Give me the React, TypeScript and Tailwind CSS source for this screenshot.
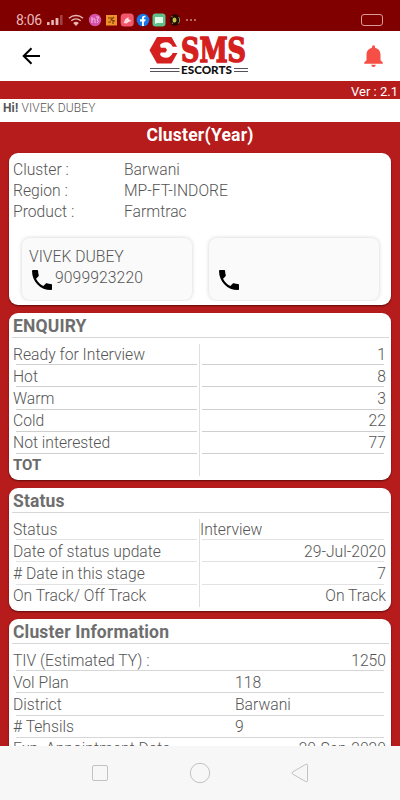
import type { ReactNode } from "react";
import { clsx } from "clsx";

type Align = "left" | "right" | "middle";

interface RowData {
  label: string;
  value?: string;
  align?: Align;
  bold?: boolean;
}

const ENQUIRY: RowData[] = [
  { label: "Ready for Interview", value: "1" },
  { label: "Hot", value: "8" },
  { label: "Warm", value: "3" },
  { label: "Cold", value: "22" },
  { label: "Not interested", value: "77" },
  { label: "TOT", bold: true },
];

const STATUS: RowData[] = [
  { label: "Status", value: "Interview", align: "left" },
  { label: "Date of status update", value: "29-Jul-2020" },
  { label: "# Date in this stage", value: "7" },
  { label: "On Track/ Off Track", value: "On Track" },
];

const CLUSTER_INFO: RowData[] = [
  { label: "TIV (Estimated TY) :", value: "1250" },
  { label: "Vol Plan", value: "118", align: "middle" },
  { label: "District", value: "Barwani", align: "middle" },
  { label: "# Tehsils", value: "9", align: "middle" },
  { label: "Exp. Appointment Date", value: "20-Sep-2020" },
];

const DETAILS = [
  ["Cluster :", "Barwani"],
  ["Region :", "MP-FT-INDORE"],
  ["Product :", "Farmtrac"],
];

function StatusBar() {
  return (
    <div className="flex h-[31px] shrink-0 items-end justify-between bg-[#800000] pr-[17px] pb-[4px] pl-[16px]">
      <div className="flex h-[15px] items-center text-[#e8b9b9]">
        <span className="w-[30px] text-[14px] leading-none font-normal tracking-[-0.3px]">8:06</span>
        <svg className="ml-[1px] h-[10px] w-[17px]" viewBox="0 0 17 10" fill="currentColor">
          <rect x="0" y="7" width="2.6" height="3" rx=".6" />
          <rect x="4.3" y="5" width="2.6" height="5" rx=".6" />
          <rect x="8.6" y="3" width="2.8" height="7" rx=".6" />
          <rect x="13" y="0" width="2.6" height="10" rx=".6" opacity=".35" />
        </svg>
        <svg className="ml-[4px] h-[12px] w-[16px]" viewBox="0 0 16 12" fill="none" stroke="currentColor" strokeWidth="1.4">
          <path d="M1 4.2a10.5 10.5 0 0 1 14 0M3.3 6.7a7 7 0 0 1 9.4 0" />
          <path d="M5.2 9a4.3 4.3 0 0 1 5.6 0L8 12z" fill="currentColor" stroke="none" />
        </svg>
        <svg className="ml-[4px] h-[14px] w-[94px]" viewBox="88 0 94 14">
          <circle cx="95" cy="7" r="6.2" fill="#d552a8" />
          <path d="M92 4v6M92 7q3-3 3 0v3M96 4h3l-2 3q3 1 0 3" fill="none" stroke="#f5b8df" strokeWidth="1" />
          <rect x="106" y="2" width="11" height="10.5" fill="#ef922c" />
          <path d="M108 5h4M108 9h3M114 4l-3 3 4 1M113 7v4" fill="none" stroke="#7a3a08" strokeWidth="1.1" />
          <rect x="120.7" y=".5" width="13" height="13" rx="3.5" fill="#f1576a" />
          <path d="M123.5 10l2-4 3-2v2l3 2-3 1-2 1.5z" fill="#ffd9dc" />
          <circle cx="143" cy="7" r="6.3" fill="#1877e8" />
          <path d="M142 13V8.5h-2V6.3h2V5q0-2.7 3.4-2.3v1.7q-1.5-.2-1.5 1v.9h1.7l-.4 2.2h-1.3V13z" fill="#fff" />
          <rect x="152.5" y=".5" width="13" height="13" rx="3" fill="#5fc089" />
          <path d="M155 4h8v6h-6l-2 1z" fill="#e4fbe9" />
          <ellipse cx="175" cy="7" rx="5" ry="6" fill="#260b04" />
          <ellipse cx="174.5" cy="7" rx="2" ry="2.5" fill="#c1c54b" />
          <path d="M171.5 3l1.2 1.5M178.5 4l1 1.5v3l-1 2M172 11l1-1.5" fill="none" stroke="#b5b36a" strokeWidth=".8" />
        </svg>
        <div className="ml-[4px] flex gap-[2px]">
          <i className="size-[2px] rounded-full bg-[#c98888]" />
          <i className="size-[2px] rounded-full bg-[#c98888]" />
          <i className="size-[2px] rounded-full bg-[#c98888]" />
        </div>
      </div>
      <div className="mb-[1px] h-[12px] w-[22px] rounded-[3px] border border-[#d99a9a]" />
    </div>
  );
}

function Logo() {
  return (
    <svg className="h-[42px] w-[100px] overflow-visible" viewBox="149 34 100 42">
      <path d="M157 36h14.500l7.500 13.300-7.500 13.200H157L149.500 49.300z" fill="#d4211f" />
      {/* wrench */}
      <path d="M160 44q2-2.800 6-2.800 4.500 0 6.700 4.600H180v6.200h-7.300q-2.200 4.800-6.700 4.800-4 0-6-3l.8-2.300h4.700l1.500-2.400-1.500-2.400h-4.700z" fill="#fff" />
      <text
        x="181"
        y="61"
        textLength="65"
        lengthAdjust="spacingAndGlyphs"
        fontFamily="'DejaVu Serif', serif"
        fontWeight="700"
        fontSize="33"
        fill="#d4211f"
        stroke="#d4211f"
        strokeWidth="1.6"
        strokeLinejoin="miter"
      >
        SMS
      </text>
      <text
        x="181"
        y="73.3"
        textLength="51"
        lengthAdjust="spacingAndGlyphs"
        fontFamily="Lato, sans-serif"
        fontWeight="900"
        fontSize="11.5"
        fill="#111"
      >
        ESCORTS
      </text>
      <path d="M150 67.5h29.500M150 70.500h29.500M234 67.500h14M234 70.500h14" stroke="#55505a" strokeWidth="1.1" />
    </svg>
  );
}

function Header() {
  return (
    <header className="flex h-[50px] shrink-0 items-center bg-white pr-[17px] pl-[22px]">
      <svg className="h-[18px] w-[19px]" viewBox="0 0 19 18" fill="none" stroke="#000" strokeWidth="2">
        <path d="M9.5 1.2L1.7 9l7.8 7.8M1.7 9H18" />
      </svg>
      <div className="ml-[108px] flex-1">
        <Logo />
      </div>
      <svg className="h-[22px] w-[19px]" viewBox="0 0 19 22" fill="#f64f46">
        <path d="M8 1.8a1.5 1.5 0 0 1 3 0v.9c3.5.8 5.5 3.5 5.5 7v5.5l2.3 2.3v1.2H.2v-1.2l2.3-2.3V9.7c0-3.5 2-6.2 5.5-7zM7.3 19.7h4.4a2.2 2.2 0 0 1-4.4 0z" />
      </svg>
    </header>
  );
}

function Card({ className, children }: { className?: string; children: ReactNode }) {
  return (
    <section className={clsx("shrink-0 overflow-hidden rounded-[9px] bg-white shadow-[0_1px_2px_rgba(60,0,0,0.7)]", className)}>
      {children}
    </section>
  );
}

function CardTitle({ children }: { children: ReactNode }) {
  return (
    <h2 className="mr-[2px] ml-[3px] h-[25px] border-b border-[#d6d6d6] pl-[1px] text-[17.5px] leading-[26px] font-bold tracking-[0.15px] text-[#6e6e6e]">
      {children}
    </h2>
  );
}

function Rows({ rows, split, line }: { rows: RowData[]; split?: boolean; line: string }) {
  return (
    <div className="relative pt-[5px] pr-[5px] pl-[4px]">
      {split && <div className="absolute top-[6px] bottom-0 left-[190px] w-px bg-[#dedede]" />}
      {rows.map((row, i) => (
        <div key={row.label} className="flex h-[22.2px] flex-col">
          <div className="flex h-[21.2px] items-center pt-[1px] whitespace-nowrap">
            <span className={clsx("flex-1", row.bold && "text-[15px] font-bold text-[#6a6a6a]")}>{row.label}</span>
            <span
              className={clsx(
                row.align === "left" && "w-[186px]",
                row.align === "middle" && "w-[151px]",
              )}
            >
              {row.value}
            </span>
          </div>
          {i < rows.length - 1 && (
            <div className="mr-[2px] ml-[3px] flex gap-[5px]">
              <i className={clsx("h-px w-[181px]", line)} />
              {!split && <i className={clsx("-mx-[5px] h-px w-[5px]", line)} />}
              <i className={clsx("h-px flex-1", line)} />
            </div>
          )}
        </div>
      ))}
    </div>
  );
}

function Contact({ name, phone }: { name?: string; phone?: string }) {
  return (
    <div className="h-[62px] w-[170px] rounded-[8px] bg-[#fafafa] pt-[9px] pl-[7px] shadow-[0_0_4px_rgba(0,0,0,0.18)]">
      <div className="h-[20px] leading-[20px]">{name}</div>
      <div className="flex h-[24px]">
        <svg className="mt-[1px] ml-[1px] size-[24px]" viewBox="0 0 24 24" fill="#000">
          <path
            d="M6.62 10.79c1.44 2.83 3.76 5.14 6.59 6.59l2.2-2.2c.27-.27.67-.36 1.02-.24 1.12.37 2.33.57 3.57.57.55 0 1 .45 1 1V20c0 .55-.45 1-1 1-9.39 0-17-7.61-17-17 0-.55.45-1 1-1h3.5c.55 0 1 .45 1 1 0 1.25.2 2.45.57 3.57.11.35.03.74-.25 1.02z"
            transform="translate(-1.3 -1.3) scale(1.11)"
          />
        </svg>
        <span className="ml-[1px] leading-[22px] tracking-[0.1px]">{phone}</span>
      </div>
    </div>
  );
}

function NavBar() {
  return (
    <nav className="h-[54px] shrink-0 bg-[#f7f7f7]">
      <svg className="h-[54px] w-[400px]" viewBox="0 0 400 54" fill="none" stroke="#c2c2c2">
        <rect x="92.5" y="19.5" width="15" height="15" rx="1.5" />
        <circle cx="200" cy="27" r="9.7" />
        <path d="M306 18.2l-13.3 7.7q-1.5 1.1 0 2.2L306 35.7q1.5.5 1.5-1V19.2q0-1.5-1.5-1z" />
      </svg>
    </nav>
  );
}

export default function App() {
  return (
    <div className="flex h-[800px] w-[400px] flex-col overflow-hidden bg-[#b71c1c] font-['Roboto',sans-serif] text-[15.7px] leading-[21px] font-light text-[#555555]">
      <StatusBar />
      <Header />
      <div className="h-[18px] shrink-0 pr-[2px] text-right text-[13px] leading-[22px] font-normal text-white">
        Ver : 2.1
      </div>
      <div className="h-[23px] shrink-0 bg-white pl-[3px] text-[12px] leading-[19px] tracking-[0.15px]">
        <b className="font-bold">Hi!</b> VIVEK DUBEY
      </div>
      <main className="flex min-h-0 flex-1 flex-col overflow-hidden px-[9px]">
        <h1 className="h-[31px] shrink-0 text-center text-[17.5px] leading-[26px] font-bold tracking-[0.2px] text-white">
          Cluster(Year)
        </h1>
        <Card className="h-[151.5px] pt-[6px]">
          <dl className="pl-[4px]">
            {DETAILS.map(([label, value]) => (
              <div key={label} className="flex h-[21px]">
                <dt className="w-[111px]">{label}</dt>
                <dd>{value}</dd>
              </div>
            ))}
          </dl>
          <div className="mt-[13px] flex h-[66px] gap-[17px] overflow-hidden pt-[3px] pl-[13px]">
            <Contact name="VIVEK DUBEY" phone="9099923220" />
            <Contact />
          </div>
        </Card>
        <Card className="mt-[8.5px] h-[166.5px]">
          <CardTitle>ENQUIRY</CardTitle>
          <Rows rows={ENQUIRY} split line="bg-[#cfcfcf]" />
        </Card>
        <Card className="mt-[8.5px] h-[122.5px]">
          <CardTitle>Status</CardTitle>
          <Rows rows={STATUS} split line="bg-[#e2e2e2]" />
        </Card>
        <Card className="mt-[8.5px] h-[180px]">
          <CardTitle>Cluster Information</CardTitle>
          <Rows rows={CLUSTER_INFO} line="bg-[#d6d6d6]" />
        </Card>
      </main>
      <NavBar />
    </div>
  );
}
